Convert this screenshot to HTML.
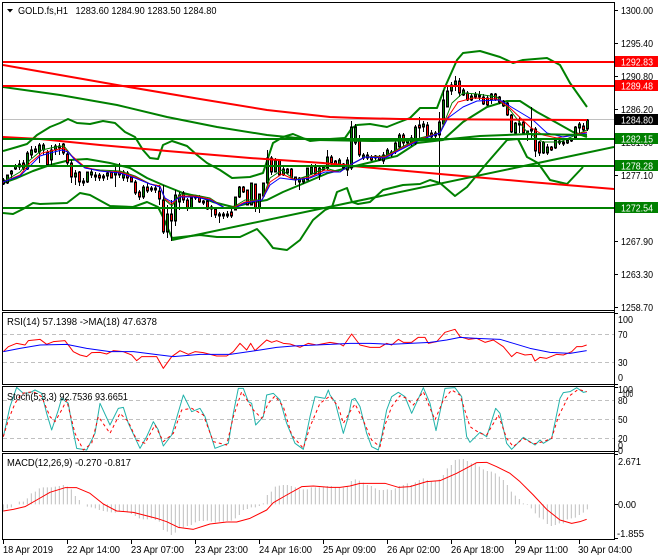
<!DOCTYPE html>
<html>
<head>
<meta charset="utf-8">
<title>GOLD.fs,H1</title>
<style>
html,body{margin:0;padding:0;background:#fff;}
svg{display:block;}
text{font-family:"Liberation Sans",sans-serif;font-size:10.5px;fill:#000;}
.w{fill:#fff;}
.z{fill:none;stroke-width:3;stroke-linejoin:round;}
</style>
</head>
<body>
<svg width="660" height="560" viewBox="0 0 660 560" xmlns="http://www.w3.org/2000/svg">
<defs>
<clipPath id="c0"><rect x="3" y="3" width="611" height="307"/></clipPath>
<clipPath id="c1"><rect x="3" y="314" width="611" height="70"/></clipPath>
<clipPath id="c2"><rect x="3" y="387" width="611" height="64"/></clipPath>
<clipPath id="c3"><rect x="3" y="454" width="611" height="85"/></clipPath>
<path id="bu" d="M7.5 176V182M11.5 172V173M15.5 167V168M19.5 165V166M27.5 154V168M31.5 151V154M35.5 150V151M39.5 146V151M43.5 146V149M51.5 151V159M55.5 147V149M59.5 147V147M75.5 174V176M83.5 182V182M87.5 173V181M91.5 173V174M95.5 176V176M103.5 177V177M107.5 174V175M115.5 172V174M123.5 173V177M143.5 188V196M151.5 189V189M155.5 189V189M167.5 215V231M175.5 196V220M179.5 196V201M191.5 199V207M195.5 197V197M203.5 202V202M211.5 208V208M219.5 215V215M223.5 215V215M227.5 215V215M235.5 198V209M239.5 188V196M251.5 184V204M259.5 195V207M263.5 184V195M267.5 159V182M275.5 161V171M283.5 170V174M287.5 170V172M299.5 179V181M303.5 179V181M307.5 169V179M311.5 168V173M319.5 169V174M323.5 168V169M327.5 158V167M339.5 161V164M343.5 165V167M347.5 161V169M351.5 128V167M355.5 128V142M363.5 156V157M367.5 156V157M375.5 157V157M383.5 156V160M387.5 151V154M395.5 144V151M399.5 136V146M407.5 141V142M411.5 139V142M415.5 128V142M423.5 125V126M435.5 134V135M439.5 123V134M443.5 101V123M447.5 92V106M451.5 86V90M455.5 82V84M463.5 91V94M471.5 97V99M475.5 95V96M479.5 96V96M491.5 95V99M515.5 124V132M519.5 124V124M527.5 132V132M531.5 130V130M543.5 143V152M547.5 148V152M555.5 141V147M567.5 141V142M571.5 140V140M575.5 128V137M579.5 125V127M587.5 121V128"/>
<path id="be" d="M3.5 181V183M23.5 164V167M47.5 153V164M63.5 145V152M67.5 155V162M71.5 164V176M79.5 173V181M99.5 176V177M111.5 173V177M119.5 173V174M127.5 174V177M131.5 178V181M135.5 183V192M139.5 193V196M147.5 188V190M159.5 192V198M163.5 201V231M171.5 215V220M183.5 194V199M187.5 201V207M199.5 198V201M207.5 202V208M215.5 210V214M231.5 213V215M243.5 188V191M247.5 191V204M255.5 185V207M271.5 159V171M279.5 161V174M291.5 170V177M295.5 178V179M315.5 168V173M331.5 158V162M335.5 162V164M359.5 141V154M371.5 158V159M379.5 158V159M391.5 153V154M403.5 136V142M419.5 126V127M427.5 126V136M431.5 134V136M459.5 82V92M467.5 94V99M483.5 98V103M487.5 99V104M495.5 95V99M499.5 98V101M503.5 102V105M507.5 104V114M511.5 116V131M523.5 123V132M535.5 130V150M539.5 143V152M551.5 148V149M559.5 142V142M563.5 143V143M583.5 127V129"/>
</defs>
<rect width="660" height="560" fill="#fff"/>

<!-- Main chart -->
<g clip-path="url(#c0)">
<line x1="3" y1="119.5" x2="614" y2="119.5" stroke="#c0c0c0"/>
<!-- Bollinger bands -->
<g fill="none" stroke="#008000" stroke-width="2" stroke-linejoin="round">
<polyline points="3,151 17,147 27,144 37,135 50,127 60,123 68,119 77,123 90,124 103,121 115,123 125,132 135,137 143,150 150,158 158,159 163,145 172,141 187,146 197,155 207,163 220,170 232,178 250,177 263,173 268,158 273,143 283,137 293,134 310,141 330,139 345,138 352,128 357,125 370,124 387,127 397,123 410,118 420,108 437,108 445,87 457,60 463,53 480,51 500,57 513,63 523,60 547,58 560,65 570,83 587,107"/>
<polyline points="3,183 17,178 33,171 50,165 70,160 87,159 110,163 130,168 147,178 163,185 183,193 200,197 213,202 233,207 250,203 267,200 283,192 307,182 328,173 347,168 380,160 397,156 417,143 443,140 463,122 487,107 507,101 520,101 537,112 557,123 573,132 587,137"/>
<polyline points="3,213 13,214 23,209 33,203 40,204 67,203 80,193 90,195 110,206 133,207 147,202 158,207 163,217 172,238 200,235 217,237 240,237 257,229 267,240 273,248 287,250 300,240 313,220 325,210 332,207 337,192 347,188 352,202 358,204 370,202 383,190 403,185 420,184 430,180 440,183 455,196 467,187 487,163 507,140 518,139 527,157 538,163 550,180 567,184 583,167"/>
</g>
<!-- Wicks -->
<path stroke="#000" fill="none" d="M3.5 178V185M7.5 175V184M11.5 170V178M15.5 164V170M19.5 160V170M23.5 160V170M27.5 151V170M31.5 146V158M35.5 146V153M39.5 143V163M43.5 143V155M47.5 150V167M51.5 145V167M55.5 144V155M59.5 143V155M63.5 143V155M67.5 150V165M71.5 160V183M75.5 170V185M79.5 171V186M83.5 178V186M87.5 172V183M91.5 169V178M95.5 172V181M99.5 173V181M103.5 174V181M107.5 171V180M111.5 172V178M115.5 165V187M119.5 163V178M123.5 170V181M127.5 171V182M131.5 177V182M135.5 180V195M139.5 190V200M143.5 185V199M147.5 183V193M151.5 186V192M155.5 186V193M159.5 185V205M163.5 185V234M167.5 205V238M171.5 200V241M175.5 190V226M179.5 192V210M183.5 191V203M187.5 198V211M191.5 198V208M195.5 195V200M199.5 195V203M203.5 200V205M207.5 200V210M211.5 205V217M215.5 207V218M219.5 212V223M223.5 212V219M227.5 211V218M231.5 209V218M235.5 197V210M239.5 186V198M243.5 186V193M247.5 190V205M251.5 183V205M255.5 184V212M259.5 194V213M263.5 183V196M267.5 150V185M271.5 156V175M275.5 158V172M279.5 160V176M283.5 167V176M287.5 168V174M291.5 168V178M295.5 177V185M299.5 177V190M303.5 177V184M307.5 168V180M311.5 164V175M315.5 164V175M319.5 167V180M323.5 165V171M327.5 150V170M331.5 155V165M335.5 160V166M339.5 158V166M343.5 163V170M347.5 157V176M351.5 121V170M355.5 124V145M359.5 135V157M363.5 153V160M367.5 152V160M371.5 155V161M375.5 155V160M379.5 155V161M383.5 152V164M387.5 148V157M391.5 150V157M395.5 140V154M399.5 133V150M403.5 133V146M407.5 138V146M411.5 135V146M415.5 125V145M419.5 117V140M423.5 121V132M427.5 122V140M431.5 130V140M435.5 131V140M439.5 112V183M443.5 90V127M447.5 85V107M451.5 82V95M455.5 76V91M459.5 78V97M463.5 88V96M467.5 91V101M471.5 94V101M475.5 92V99M479.5 91V100M483.5 94V105M487.5 95V106M491.5 93V104M495.5 93V101M499.5 96V104M503.5 100V107M507.5 102V116M511.5 114V133M515.5 122V135M519.5 117V133M523.5 121V134M527.5 131V141M531.5 107V139M535.5 127V157M539.5 141V156M543.5 141V154M547.5 144V155M551.5 146V151M555.5 139V149M559.5 138V145M563.5 140V146M567.5 139V144M571.5 138V142M575.5 126V139M579.5 122V134M583.5 123V132M587.5 119V131"/>
<!-- Candle bodies -->
<use href="#bu" stroke="#000" stroke-width="3" stroke-linecap="square"/>
<use href="#be" stroke="#000" stroke-width="3" stroke-linecap="square"/>
<use href="#bu" stroke="#008000" stroke-width="1"/>
<use href="#be" stroke="#ff0000" stroke-width="1"/>
<!-- Thin MAs -->
<g fill="none" stroke-width="1" stroke-linejoin="round">
<polyline stroke="#008000" points="3,182 20,172 30,160 42,150 55,147 64,146 72,156 85,168 100,170 120,171 135,176 150,184 160,186 165,200 172,206 180,194 195,195 210,198 225,208 235,206 245,200 262,200 270,178 282,170 295,180 310,175 325,168 340,172 350,165 365,157 385,156 400,148 420,138 440,133 452,103 463,93 477,94 497,97 510,110 527,132 543,142 560,142 587,130"/>
<polyline stroke="#ff0000" points="3,182 20,175 30,163 42,153 55,150 64,148 72,156 85,167 100,171 120,172 135,177 150,184 160,186 165,199 172,204 180,196 195,196 210,199 225,208 235,207 245,202 262,200 270,182 282,174 295,180 310,177 325,170 340,172 350,165 365,157 385,157 400,149 420,139 440,133 448,117 458,102 473,98 497,99 510,108 530,127 543,135 557,138 587,132"/>
<polyline stroke="#0000ff" points="3,182 20,176 30,166 40,156 50,153 62,150 68,152 75,160 85,168 100,171 120,173 135,178 150,184 160,187 165,198 172,202 180,197 195,197 210,200 225,208 235,208 245,203 262,200 270,185 280,178 295,180 310,178 325,172 340,172 350,165 365,157 385,158 400,150 420,140 440,133 448,118 463,107 477,101 500,100 513,108 533,120 547,133 563,137 587,133"/>
</g>
<!-- Long MAs and trendlines -->
<g fill="none" stroke-width="2" stroke-linejoin="round">
<polyline stroke="#ff0000" points="3,65 60,75 117,85 200,99 267,110 330,117 357,118 400,119 587,120"/>
<polyline stroke="#008000" points="3,87 60,95 117,105 167,117 217,127 267,135 317,140 373,141 440,140 480,136 530,134 587,135"/>
<polyline stroke="#ff0000" points="3,137 40,139 100,145 167,151 250,158 323,163 363,167 440,174 530,182 614,189"/>
<line x1="172" y1="240" x2="614" y2="147" stroke="#008000"/>
<line x1="3" y1="62" x2="614" y2="62" stroke="#ff0000"/>
<line x1="3" y1="86" x2="614" y2="86" stroke="#ff0000"/>
<line x1="3" y1="139" x2="614" y2="139" stroke="#008000"/>
<line x1="3" y1="166" x2="614" y2="166" stroke="#008000"/>
<line x1="3" y1="208" x2="614" y2="208" stroke="#008000"/>
</g>
</g>

<!-- RSI -->
<g clip-path="url(#c1)">
<path d="M3 334.5H614M3 362.5H614" stroke="#c0c0c0" stroke-dasharray="4 3"/>
<g transform="translate(0,310) scale(.33333)">
<polyline class="z" stroke="#ff0000" points="10,125 25,110 50,100 75,105 85,92 120,88 140,103 160,95 195,92 220,125 240,135 260,140 275,128 300,127 320,132 340,122 370,125 395,135 410,152 425,140 470,140 490,175 515,140 540,122 565,133 585,125 610,128 650,138 680,138 700,125 720,100 740,120 752,100 765,122 800,90 815,97 830,92 850,100 870,102 900,112 925,100 950,105 990,97 1020,102 1030,108 1055,72 1080,105 1110,112 1140,112 1160,100 1175,105 1195,88 1210,97 1235,97 1255,82 1275,82 1285,100 1310,95 1335,67 1365,58 1380,80 1405,88 1430,85 1455,97 1480,90 1510,110 1535,140 1550,127 1575,135 1595,133 1605,153 1620,142 1640,145 1670,133 1690,135 1715,125 1730,110 1745,110 1760,105"/>
<polyline class="z" stroke="#0000ff" points="10,125 60,115 120,105 200,103 260,115 330,125 400,125 480,135 520,140 600,133 690,133 780,120 830,112 880,108 990,103 1050,100 1110,100 1170,103 1230,100 1290,97 1340,90 1380,82 1430,85 1500,88 1540,100 1590,115 1650,127 1710,130 1760,122"/>
</g>
</g>

<!-- Stochastic -->
<g clip-path="url(#c2)">
<path d="M3 400.5H614M3 419.5H614M3 438.5H614" stroke="#c0c0c0" stroke-dasharray="4 3"/>
<g transform="translate(0,310) scale(.33333)">
<polyline class="z" stroke="#20b2aa" points="10,380 30,290 50,232 70,250 90,248 105,240 125,250 140,310 155,360 175,300 185,265 205,280 215,340 230,415 260,420 285,370 300,280 330,345 355,295 370,292 385,340 420,415 440,380 460,335 475,360 490,408 515,375 550,255 575,305 600,295 615,320 645,415 685,400 700,310 715,235 730,235 745,275 755,280 767,345 790,320 800,255 820,250 840,270 860,340 885,400 910,418 930,320 945,260 975,265 985,240 990,255 1005,275 1030,370 1045,320 1055,270 1065,265 1080,290 1100,370 1115,410 1135,420 1145,380 1160,300 1175,260 1195,247 1215,260 1235,310 1270,233 1290,280 1308,362 1335,235 1365,233 1385,260 1400,380 1410,397 1440,367 1460,380 1487,295 1500,310 1520,400 1535,418 1570,382 1605,405 1620,390 1630,400 1655,385 1680,265 1690,248 1710,245 1730,233 1750,247 1760,245"/>
<polyline class="z" stroke="#ff0000" stroke-dasharray="9 9" points="10,380 25,330 45,280 65,250 100,245 125,260 150,320 165,335 185,300 200,270 225,370 250,420 275,400 295,320 330,370 360,310 385,335 410,390 435,400 465,345 490,395 520,370 545,300 575,295 610,315 640,395 680,405 700,320 725,245 760,300 785,325 805,280 825,258 850,290 875,375 910,415 930,350 960,280 990,258 1015,290 1030,340 1050,305 1065,282 1085,320 1115,390 1140,410 1155,345 1175,290 1200,257 1220,265 1240,285 1270,245 1305,330 1330,270 1355,240 1380,255 1410,350 1440,370 1460,375 1495,315 1520,385 1540,410 1570,385 1600,402 1630,395 1655,385 1675,320 1705,260 1735,238 1760,245"/>
</g>
</g>

<!-- MACD -->
<g clip-path="url(#c3)">
<g transform="translate(0,450) scale(.33333)">
<path fill="none" stroke="#c0c0c0" stroke-width="3" d="M10 163V185M22 163V175M34 163V172M58 163V155M70 163V155M82 163V145M94 163V130M106 163V125M118 163V115M130 163V112M142 163V112M154 163V112M166 163V110M178 163V108M190 163V105M202 163V110M214 163V118M226 163V138M238 163V150M262 163V170M274 163V172M286 163V175M298 163V180M310 163V183M322 163V185M334 163V187M346 163V188M358 163V185M370 163V185M382 163V187M394 163V192M406 163V198M418 163V205M430 163V208M442 163V208M454 163V205M466 163V210M478 163V215M490 163V240M502 163V245M514 163V255M526 163V248M538 163V235M550 163V232M562 163V228M574 163V225M586 163V217M598 163V213M610 163V213M622 163V212M634 163V215M646 163V218M658 163V215M670 163V215M682 163V213M694 163V212M706 163V205M718 163V195M730 163V180M742 163V177M754 163V172M766 163V172M778 163V168M790 163V160M802 163V135M814 163V125M826 163V110M838 163V107M850 163V105M862 163V105M874 163V108M886 163V112M898 163V118M910 163V118M922 163V118M934 163V112M946 163V112M958 163V112M970 163V110M982 163V108M994 163V108M1006 163V113M1018 163V113M1030 163V113M1042 163V108M1054 163V93M1066 163V88M1078 163V92M1090 163V98M1102 163V105M1114 163V108M1126 163V115M1138 163V120M1150 163V120M1162 163V118M1174 163V120M1186 163V115M1198 163V108M1210 163V105M1222 163V100M1234 163V105M1246 163V97M1258 163V90M1270 163V85M1282 163V90M1294 163V93M1306 163V92M1318 163V88M1330 163V75M1342 163V55M1354 163V45M1366 163V30M1378 163V28M1390 163V27M1402 163V33M1414 163V40M1426 163V38M1438 163V50M1450 163V58M1462 163V63M1474 163V65M1486 163V70M1498 163V80M1510 163V90M1522 163V105M1534 163V125M1546 163V137M1558 163V147M1570 163V160M1582 163V165M1594 163V175M1606 163V190M1618 163V203M1630 163V208M1642 163V222M1654 163V228M1666 163V225M1678 163V220M1690 163V220M1702 163V208M1714 163V205M1726 163V203M1738 163V195M1750 163V188M1762 163V178"/>
<polyline class="z" stroke="#ff0000" points="10,183 40,178 75,170 110,150 150,127 195,113 230,113 270,130 310,162 350,183 400,187 470,205 500,215 535,232 580,238 630,222 680,216 710,216 750,205 800,180 820,158 860,135 905,110 940,108 990,112 1020,112 1050,108 1080,100 1155,100 1195,112 1230,110 1280,95 1320,92 1370,70 1430,38 1460,37 1490,50 1530,70 1560,95 1600,135 1640,178 1680,210 1715,220 1740,215 1760,208"/>
</g>
</g>

<!-- Frames -->
<g fill="#000" shape-rendering="crispEdges">
<rect x="2" y="2" width="613" height="1"/>
<rect x="2" y="2" width="1" height="309"/>
<rect x="2" y="310" width="613" height="1"/>
<rect x="2" y="312" width="613" height="1"/>
<rect x="2" y="312" width="1" height="73"/>
<rect x="2" y="384" width="613" height="1"/>
<rect x="2" y="386" width="613" height="1"/>
<rect x="2" y="386" width="1" height="66"/>
<rect x="2" y="451" width="613" height="1"/>
<rect x="2" y="453" width="613" height="1"/>
<rect x="2" y="453" width="1" height="87"/>
<rect x="2" y="539" width="613" height="1"/>
<rect x="614" y="2" width="1" height="538"/>
</g>
<path stroke="#000" shape-rendering="crispEdges" d="M615 10.5H618M615 43.5H618M615 76.5H618M615 109.5H618M615 142.5H618M615 175.5H618M615 208.5H618M615 241.5H618M615 274.5H618M615 307.5H618M615 313.5H618M615 384.5H618M615 387.5H618M615 451.5H618M615 454.5H618M615 504.5H618M615 538.5H618M3.5 540V544M67.5 540V544M131.5 540V544M195.5 540V544M259.5 540V544M323.5 540V544M387.5 540V544M451.5 540V544M515.5 540V544M579.5 540V544"/>

<!-- Title -->
<polygon points="7,9 13,9 10,12.5" fill="#000"/>
<text x="18" y="14" textLength="50" lengthAdjust="spacingAndGlyphs">GOLD.fs,H1</text>
<text x="75.5" y="14" textLength="141" lengthAdjust="spacingAndGlyphs">1283.60 1284.90 1283.50 1284.80</text>
<text x="7" y="325" textLength="150" lengthAdjust="spacingAndGlyphs">RSI(14) 57.1398  -&gt;MA(18) 47.6378</text>
<text x="7" y="400" textLength="121" lengthAdjust="spacingAndGlyphs">Stoch(5,3,3) 92.7536 93.6651</text>
<text x="7" y="466" textLength="124" lengthAdjust="spacingAndGlyphs">MACD(12,26,9) -0.270 -0.817</text>

<!-- Price axis -->
<g lengthAdjust="spacingAndGlyphs">
<text x="621" y="14" textLength="32" lengthAdjust="spacingAndGlyphs">1300.00</text>
<text x="621" y="47" textLength="32" lengthAdjust="spacingAndGlyphs">1295.40</text>
<text x="621" y="80" textLength="32" lengthAdjust="spacingAndGlyphs">1290.80</text>
<text x="621" y="113" textLength="32" lengthAdjust="spacingAndGlyphs">1286.20</text>
<text x="621" y="146" textLength="32" lengthAdjust="spacingAndGlyphs">1281.60</text>
<text x="621" y="179" textLength="32" lengthAdjust="spacingAndGlyphs">1277.10</text>
<text x="621" y="245" textLength="32" lengthAdjust="spacingAndGlyphs">1267.90</text>
<text x="621" y="278" textLength="32" lengthAdjust="spacingAndGlyphs">1263.30</text>
<text x="621" y="311" textLength="32" lengthAdjust="spacingAndGlyphs">1258.70</text>
</g>
<g shape-rendering="crispEdges">
<rect x="615" y="56" width="43" height="11" fill="#ff0000"/>
<rect x="615" y="80" width="43" height="11" fill="#ff0000"/>
<rect x="615" y="114" width="43" height="11" fill="#000"/>
<rect x="615" y="133" width="43" height="11" fill="#008000"/>
<rect x="615" y="160" width="43" height="11" fill="#008000"/>
<rect x="615" y="202" width="43" height="11" fill="#008000"/>
</g>
<text class="w" x="621" y="65.5" textLength="32" lengthAdjust="spacingAndGlyphs">1292.83</text>
<text class="w" x="621" y="89.5" textLength="32" lengthAdjust="spacingAndGlyphs">1289.48</text>
<text class="w" x="621" y="123.5" textLength="32" lengthAdjust="spacingAndGlyphs">1284.80</text>
<text class="w" x="621" y="142.5" textLength="32" lengthAdjust="spacingAndGlyphs">1282.15</text>
<text class="w" x="621" y="169.5" textLength="32" lengthAdjust="spacingAndGlyphs">1278.28</text>
<text class="w" x="621" y="211.5" textLength="32" lengthAdjust="spacingAndGlyphs">1272.54</text>

<!-- Indicator axes -->
<text x="618" y="323" textLength="15" lengthAdjust="spacingAndGlyphs">100</text>
<text x="618" y="338" textLength="9.5" lengthAdjust="spacingAndGlyphs">70</text>
<text x="618" y="366" textLength="9.5" lengthAdjust="spacingAndGlyphs">30</text>
<text x="618" y="381" textLength="5" lengthAdjust="spacingAndGlyphs">0</text>
<text x="618" y="393" textLength="15" lengthAdjust="spacingAndGlyphs">100</text>
<text x="622" y="397" textLength="11" lengthAdjust="spacingAndGlyphs">100</text>
<text x="618" y="404" textLength="9.5" lengthAdjust="spacingAndGlyphs">80</text>
<text x="618" y="423" textLength="9.5" lengthAdjust="spacingAndGlyphs">50</text>
<text x="618" y="442" textLength="9.5" lengthAdjust="spacingAndGlyphs">20</text>
<text x="618" y="449" textLength="5" lengthAdjust="spacingAndGlyphs">0</text>
<text x="618" y="454" textLength="5" lengthAdjust="spacingAndGlyphs">0</text>
<text x="618" y="465" textLength="23" lengthAdjust="spacingAndGlyphs">2.671</text>
<text x="618" y="508" textLength="18" lengthAdjust="spacingAndGlyphs">0.00</text>
<text x="617" y="537" textLength="27" lengthAdjust="spacingAndGlyphs">-1.855</text>

<!-- Time axis -->
<text x="3" y="553" textLength="50" lengthAdjust="spacingAndGlyphs">18 Apr 2019</text>
<text x="67" y="553" textLength="53" lengthAdjust="spacingAndGlyphs">22 Apr 14:00</text>
<text x="131" y="553" textLength="53" lengthAdjust="spacingAndGlyphs">23 Apr 07:00</text>
<text x="195" y="553" textLength="53" lengthAdjust="spacingAndGlyphs">23 Apr 23:00</text>
<text x="259" y="553" textLength="53" lengthAdjust="spacingAndGlyphs">24 Apr 16:00</text>
<text x="323" y="553" textLength="53" lengthAdjust="spacingAndGlyphs">25 Apr 09:00</text>
<text x="387" y="553" textLength="53" lengthAdjust="spacingAndGlyphs">26 Apr 02:00</text>
<text x="451" y="553" textLength="53" lengthAdjust="spacingAndGlyphs">26 Apr 18:00</text>
<text x="515" y="553" textLength="53" lengthAdjust="spacingAndGlyphs">29 Apr 11:00</text>
<text x="578" y="553" textLength="54" lengthAdjust="spacingAndGlyphs">30 Apr 04:00</text>
</svg>
</body>
</html>
